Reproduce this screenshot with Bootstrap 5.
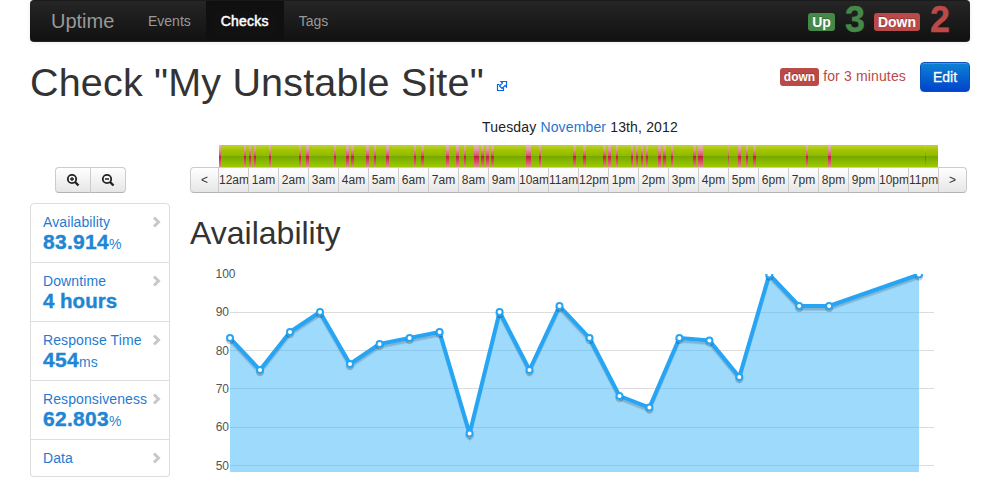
<!DOCTYPE html>
<html lang="en">
<head>
<meta charset="utf-8">
<title>Uptime - Check "My Unstable Site"</title>
<link href="https://cdn.jsdelivr.net/npm/bootstrap@5.3.0/dist/css/bootstrap.min.css" rel="stylesheet">
<style>
body{font-family:"Liberation Sans",Arial,sans-serif;font-size:14px;line-height:20px;color:#333;background:#fff;height:498px;overflow:hidden}
a{color:#1f75cc;text-decoration:none}
.page{width:940px;margin-left:30px}
.topbar{height:42px;padding:0;background:linear-gradient(#252525,#111);border-radius:4px;box-shadow:0 1px 4px rgba(0,0,0,.07);border-top:1px solid #1a1a1a;border-bottom:1px solid #252525;align-items:stretch}
.topbar .navbar-brand{font-size:20px;line-height:20px;color:#999;padding:10px 20px 10px 21px;margin:0;width:103px}
.topbar .navbar-nav .nav-link{color:#999;padding:10px 15px;line-height:20px;height:40px}
.topbar .navbar-nav .nav-link.active{color:#fff;background:#111;box-shadow:inset 0 3px 8px rgba(0,0,0,.125);-webkit-text-stroke:.5px #fff;letter-spacing:.2px}
.counts{padding:0 20px 2px 0}
.tag{font-size:14px;font-weight:bold;line-height:14px;padding:2px 4px;border-radius:3px;color:#fff;text-shadow:0 -1px 0 rgba(0,0,0,.25)}
.tag-up{background:#468847}.tag-down{background:#b94a48}
.tally{font-size:36px;font-weight:bold;line-height:40px;width:20px;margin-left:10px;-webkit-text-stroke:.4px currentColor}
.tally+.tag{margin-left:9px}
.c-up{color:#468847}.c-down{color:#b94a48}
.title{font-size:39.5px;line-height:40px;font-weight:400;margin:0;letter-spacing:.18px;color:#333;white-space:nowrap}
.heading-row{height:74px;padding-top:20px}
.link-mark{display:block;margin:18px 0 0 4px}
.state{margin-top:6px;margin-right:4px;font-size:12px}
.duration{margin:4px 14px 0 0;letter-spacing:.15px}
.btn-edit{width:50px;height:30px;padding:0;font-size:14px;line-height:28px;color:#fff;border:1px solid #0b51b8;border-radius:4px;background:linear-gradient(#0d82d2,#0044cc);text-shadow:0 -1px 0 rgba(0,0,0,.25);box-shadow:inset 0 1px 0 rgba(255,255,255,.2);-webkit-text-stroke:.3px #fff}
.side{width:140px;margin-right:20px}
.tools{width:71px;height:26px;margin:51px 0 10px 25px}
.btn-soft{border:1px solid #ccc;border-bottom-color:#b3b3b3;background:linear-gradient(#fff,#e6e6e6);color:#333;font-size:12px;line-height:24px;padding:0;height:26px;border-radius:4px}
.tools svg{display:block;margin:0 auto 1px}
.stats{--bs-list-group-border-color:#ddd;--bs-list-group-border-radius:4px}
.stats .list-group-item{color:#1f7bd0;padding:8px 12px 0;height:59px;line-height:20px;white-space:nowrap;letter-spacing:.1px}
.stats .list-group-item:first-child{height:60px}
.stats .list-group-item:last-child{height:37px}
.stats strong{font-size:21px;letter-spacing:.3px;-webkit-text-stroke:.4px #1f86d4}
.stats .words{font-size:20.5px;letter-spacing:0}
.stats .value{line-height:20px;color:#1f86d4}
.stats svg{float:right;margin:4px -4px 0 0}
.main{width:780px}
.date{height:26px;padding-top:1px;color:#222;letter-spacing:.15px}
.strip{display:block;margin:3px 0 0 29px}
.hours{width:777px}
.hours .btn-soft{flex:0 0 31px;width:31px;min-width:0;overflow:hidden;text-align:center;white-space:nowrap}
.hours .btn-soft.edge{flex-basis:29px}
.section-title{font-size:32px;line-height:40px;margin:20px 0 0;font-weight:400;color:#333}
.chart{display:block;margin-top:11px}
.chart text{font-size:12px;fill:#545454;text-anchor:end}
</style>
<script src="https://cdn.jsdelivr.net/npm/bootstrap@5.3.0/dist/js/bootstrap.bundle.min.js"></script>
</head>
<body>
<div class="page">
  <nav class="navbar navbar-expand topbar">
    <a class="navbar-brand" href="#">Uptime</a>
    <div class="navbar-nav me-auto">
      <a class="nav-link" href="#">Events</a>
      <a class="nav-link active" href="#">Checks</a>
      <a class="nav-link" href="#">Tags</a>
    </div>
    <div class="d-flex align-items-center counts">
      <span class="tag tag-up mt-1">Up</span><span class="tally c-up">3</span>
      <span class="tag tag-down mt-1">Down</span><span class="tally c-down">2</span>
    </div>
  </nav>
  <header class="heading-row d-flex justify-content-between">
    <div class="d-flex">
      <h1 class="title">Check "My Unstable Site"</h1>
      <a class="ms-2" href="#" aria-label="Open site"><svg class="link-mark" width="12" height="12" viewBox="0 0 12 12" fill="none" stroke="#0a63e0" stroke-width="1.2"><path d="M3.5 4.500h-2v6h6v-3"/><path d="M5 1.500h5.500V7L9 5.500 6 8.500 3.500 6 6.500 3z" fill="#fff"/></svg></a>
    </div>
    <div class="d-flex align-items-start">
      <span class="tag tag-down state">down</span><span class="c-down duration">for 3 minutes</span>
      <a class="btn btn-edit" href="#">Edit</a>
    </div>
  </header>
  <div class="d-flex">
    <aside class="side">
      <div class="btn-group tools d-flex">
        <button class="btn btn-soft" aria-label="Zoom in"><svg width="14" height="14" viewBox="0 0 14 14" fill="none" stroke="#222"><circle cx="6" cy="6" r="4.200" stroke-width="1.800"/><path d="M9 9l3.500 3.500" stroke-width="2.400"/><path d="M6 4v4M4 6h4" stroke-width="1.300"/></svg></button>
        <button class="btn btn-soft" aria-label="Zoom out"><svg width="14" height="14" viewBox="0 0 14 14" fill="none" stroke="#222"><circle cx="6" cy="6" r="4.200" stroke-width="1.800"/><path d="M9 9l3.500 3.500" stroke-width="2.400"/><path d="M4 6h4" stroke-width="1.500"/></svg></button>
      </div>
      <div class="list-group stats">
        <a class="list-group-item" href="#"><svg width="9" height="12"><path d="M2 1.500l4.500 4.500L2 10.500" fill="none" stroke="#c8c8c8" stroke-width="3"/></svg>Availability<div class="value"><strong>83.914</strong>%</div></a>
        <a class="list-group-item" href="#"><svg width="9" height="12"><path d="M2 1.500l4.500 4.500L2 10.500" fill="none" stroke="#c8c8c8" stroke-width="3"/></svg>Downtime<div class="value"><strong class="words">4 hours</strong></div></a>
        <a class="list-group-item" href="#"><svg width="9" height="12"><path d="M2 1.500l4.500 4.500L2 10.500" fill="none" stroke="#c8c8c8" stroke-width="3"/></svg>Response Time<div class="value"><strong>454</strong>ms</div></a>
        <a class="list-group-item" href="#"><svg width="9" height="12"><path d="M2 1.500l4.500 4.500L2 10.500" fill="none" stroke="#c8c8c8" stroke-width="3"/></svg>Responsiveness<div class="value"><strong>62.803</strong>%</div></a>
        <a class="list-group-item" href="#"><svg width="9" height="12"><path d="M2 1.500l4.500 4.500L2 10.500" fill="none" stroke="#c8c8c8" stroke-width="3"/></svg>Data</a>
      </div>
    </aside>
    <main class="main">
      <div class="date text-center">Tuesday <a href="#">November</a> 13th, 2012</div>
      <svg class="strip" id="strip" width="719" height="22">
        <defs>
          <linearGradient id="ok" x2="0" y2="1"><stop offset="0" stop-color="#bfd233"/><stop offset=".22" stop-color="#a6c400"/><stop offset=".5" stop-color="#8fba00"/><stop offset=".5" stop-color="#73a800"/><stop offset="1" stop-color="#9fca00"/></linearGradient>
          <linearGradient id="bad" x2="0" y2="1"><stop offset="0" stop-color="#e6b9a8"/><stop offset=".2" stop-color="#e39a9c"/><stop offset=".5" stop-color="#d3506a"/><stop offset=".5" stop-color="#bd1b36"/><stop offset="1" stop-color="#e88790"/></linearGradient>
        </defs>
        <rect width="719" height="22" fill="url(#ok)"/>
      </svg>
      <div class="btn-group hours d-flex" id="hours"></div>
      <h2 class="section-title">Availability</h2>
      <svg class="chart" id="chart" width="780" height="220" viewBox="190 264 780 220">
        <defs><clipPath id="plot"><rect x="220" y="274" width="715" height="198"/></clipPath></defs>
      </svg>
    </main>
  </div>
</div>
<script>
const NS = 'http://www.w3.org/2000/svg';
function add(parent, tag, attrs, text) {
  const el = document.createElementNS(NS, tag);
  for (const k in attrs) el.setAttribute(k, attrs[k]);
  if (text) el.textContent = text;
  parent.appendChild(el);
  return el;
}
// Outages of the day: [offset, width]
const outages = [[0,2],[25,2],[30,2],[35,2],[50,2],[80,2],[87,3],[115,2],[127,3],[132,3],[147,3],[155,2],[167,3],[195,2],[202,3],[227,3],[237,3],[245,2],[255,5],[262,3],[267,3],[272,3],[307,5],[320,2],[354,3],[364,3],[384,3],[389,3],[397,2],[412,2],[417,2],[422,2],[427,2],[439,3],[444,3],[452,2],[474,3],[479,5],[509,1],[519,3],[527,2],[534,3],[587,2],[609,3],[706,1]];
const strip = document.getElementById('strip');
outages.forEach(([x, w]) => add(strip, 'rect', {x, y: 0, width: w, height: 22, fill: 'url(#bad)', opacity: w === 1 ? .65 : 1}));

const hours = document.getElementById('hours');
const labels = ['<'];
for (let h = 0; h < 24; h++) labels.push((h % 12 || 12) + (h < 12 ? 'am' : 'pm'));
labels.push('>');
labels.forEach((label, i) => {
  const b = document.createElement('button');
  b.className = 'btn btn-soft' + (i === 0 || i === 25 ? ' edge' : '');
  b.textContent = label;
  hours.appendChild(b);
});

const chart = document.getElementById('chart');
const points = [[230,338],[260,370],[290,332],[320,312],[350,364],[379.6,344],[409.6,338],[439.6,332],[469.6,433.6],[499.6,312],[529.5,370],[559.5,306],[589.5,338],[619.5,396],[649.4,407.6],[679.4,338],[709.4,340.5],[739.3,377],[769.3,274.5],[799.2,306],[829.1,306],[919,274.5]];
[312.5,350.5,388.5,427.5,465.5].forEach(y => add(chart, 'path', {d: `M230 ${y}H934`, stroke: '#dcdcdc'}));
[[100,273.5],[90,311.5],[80,350.5],[70,388.5],[60,426.5],[50,465.5]].forEach(([v, y]) => add(chart, 'text', {x: v === 100 ? 235.5 : 229, y: y + 4.5}, String(v)));
const g = add(chart, 'g', {'clip-path': 'url(#plot)'});
const line = points.map(p => p.join(' ')).join('L');
add(g, 'path', {d: `M230 472L${line}V472Z`, fill: '#3bb5f9', 'fill-opacity': .5});
[[3,2.5,.08],[2,2,.1]].forEach(([w, dy, o]) => add(g, 'path', {d: 'M' + line, fill: 'none', stroke: '#000', 'stroke-width': w, 'stroke-opacity': o, transform: `translate(0 ${dy + 1})`}));
add(g, 'path', {d: 'M' + line, fill: 'none', stroke: '#27a5f5', 'stroke-width': 4, 'stroke-linejoin': 'round'});
points.forEach(([x, y]) => {
  add(g, 'circle', {cx: x, cy: y + 2, r: 3.2, fill: 'none', stroke: '#000', 'stroke-opacity': .18, 'stroke-width': 2});
  add(g, 'circle', {cx: x, cy: y, r: 3, fill: '#fff', stroke: '#27a5f5', 'stroke-width': 2});
});
</script>
</body>
</html>
